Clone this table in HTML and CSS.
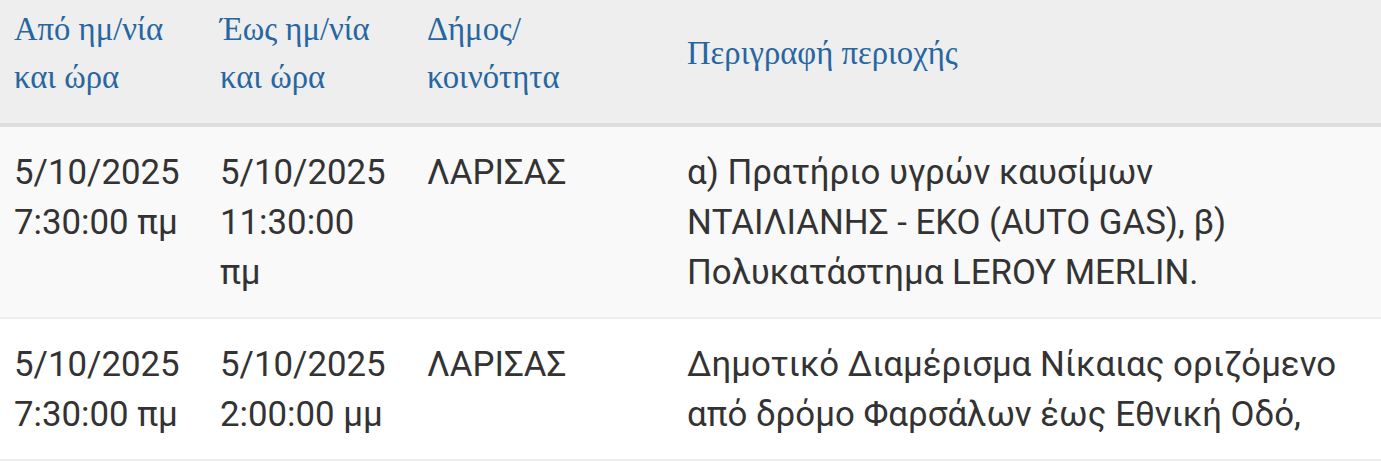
FILE: index.html
```html
<!DOCTYPE html>
<html lang="el">
<head>
<meta charset="utf-8">
<title>Διακοπές ρεύματος</title>
<link rel="stylesheet" href="styles.css">
</head>
<body>
<table class="outages">
  <thead>
    <tr>
      <th class="c-from">Από ημ/νία<br>και ώρα</th>
      <th class="c-to">Έως ημ/νία<br>και ώρα</th>
      <th class="c-area">Δήμος/<br>κοινότητα</th>
      <th class="c-desc">Περιγραφή περιοχής</th>
    </tr>
  </thead>
  <tbody>
    <tr class="odd">
      <td>5/10/2025<br>7:30:00 πμ</td>
      <td>5/10/2025<br>11:30:00<br>πμ</td>
      <td>ΛΑΡΙΣΑΣ</td>
      <td>α) Πρατήριο υγρών καυσίμων<br>ΝΤΑΙΛΙΑΝΗΣ - ΕΚΟ (AUTO GAS), β)<br>Πολυκατάστημα LEROY MERLIN.</td>
    </tr>
    <tr class="even">
      <td>5/10/2025<br>7:30:00 πμ</td>
      <td>5/10/2025<br>2:00:00 μμ</td>
      <td>ΛΑΡΙΣΑΣ</td>
      <td>Δημοτικό Διαμέρισμα Νίκαιας οριζόμενο<br>από δρόμο Φαρσάλων έως Εθνική Οδό,</td>
    </tr>
  </tbody>
</table>
</body>
</html>
```
FILE: styles.css
```css
html, body {
  margin: 0;
  padding: 0;
  background: #ffffff;
}

.outages {
  width: 100%;
  border-collapse: collapse;
  table-layout: fixed;
}

.outages th {
  background: #eeeeee;
  color: #2766a0;
  font-family: "Liberation Serif", "DejaVu Serif", serif;
  font-weight: normal;
  font-size: 32.7px;
  line-height: 48px;
  text-align: left;
  vertical-align: middle;
  padding: 5px 14px 22px 14px;
  border-bottom: 4px solid #dddddd;
}

.outages .c-from { width: 178px; }
.outages .c-to { width: 179px; }
.outages .c-area { width: 232px; }

.outages td {
  font-family: Roboto, "Noto Sans", sans-serif;
  font-size: 34.8px;
  line-height: 50px;
  color: #333333;
  vertical-align: top;
  padding: 20px 14px 20px 14px;
  border-bottom: 2px solid #eeeeee;
  white-space: nowrap;
}

.outages tr.odd td { background: #f9f9f9; }
.outages tr.even td { background: #ffffff; }
```
